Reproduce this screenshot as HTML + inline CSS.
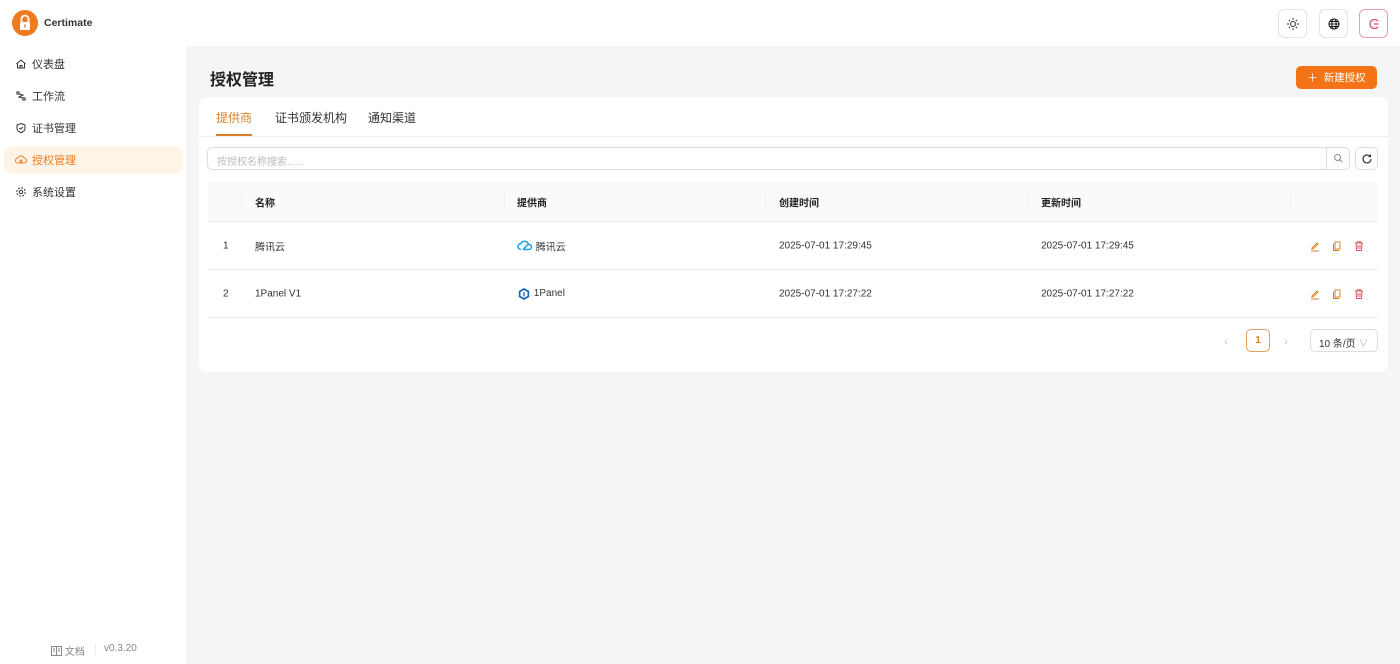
<!DOCTYPE html>
<html><head><meta charset="utf-8"><style>
*{box-sizing:border-box;margin:0;padding:0}
body{width:1400px;height:664px;overflow:hidden;background:#f5f5f5;font-family:"Liberation Sans","Noto Sans CJK SC",sans-serif;color:#222;font-size:12px;position:relative}
.top{position:absolute;left:0;top:0;width:1400px;height:46px;background:#fff}
.side{position:absolute;left:0;top:0;width:186px;height:664px;background:#fff}
.logo{position:absolute;left:12px;top:10px;width:26px;height:26px;border-radius:50%;background:#f07a1e}
.brand{position:absolute;left:44px;top:17px;font-size:10.5px;font-weight:bold;color:#333}
.mi{position:absolute;left:4px;width:179px;height:28px;border-radius:8px;display:flex;align-items:center;padding-left:11px;font-size:11px;color:#333}
.mi svg{margin-right:5px}
.mi.act{background:#fff4e8;color:#f07a1e}
.tb{position:absolute;top:9px;width:29px;height:29px;border:1px solid #e4e4e4;border-radius:6px;display:flex;align-items:center;justify-content:center;background:#fff}
h1{position:absolute;left:210px;top:66px;font-size:16px;font-weight:bold;color:#222}
.new{position:absolute;left:1296px;top:66px;width:81px;height:23px;background:#f57317;border-radius:5px;color:#fff;font-size:10.5px;display:flex;align-items:center;justify-content:center}
.card{position:absolute;left:199px;top:97px;width:1189px;height:275px;background:#fff;border-radius:8px}
.tabs{position:absolute;left:0;top:0;width:100%;height:40px;border-bottom:1px solid #eee}
.tab{position:absolute;top:12px;font-size:12px;color:#333}
.search{position:absolute;left:8px;top:50px;width:1143px;height:23px;border:1px solid #ddd;border-radius:5px;color:#bbb;font-size:10px;padding:5px 9px}
.sbtn{position:absolute;right:0;top:-1px;width:23px;height:23px;border-left:1px solid #ddd}
.ref{position:absolute;left:1156px;top:50px;width:23px;height:23px;border:1px solid #ddd;border-radius:5px;display:flex;align-items:center;justify-content:center}
.thead{position:absolute;left:9px;top:85px;width:1170px;height:40px;background:#fafafa;border-bottom:1px solid #eee;font-weight:bold;font-size:10px}
.row{position:absolute;left:9px;width:1170px;height:48px;border-bottom:1px solid #eee;font-size:10px;color:#333}
.c{position:absolute;top:50%;transform:translateY(-50%);display:flex;align-items:center}
.sep{position:absolute;top:12px;width:1px;height:16px;background:#eee}
</style></head><body>
<div class="top"></div>
<div class="side">
<div class="logo"><svg width="26" height="26" viewBox="0 0 26 26"><path d="M9.5 12V9a3.5 3.5 0 0 1 7 0v3" fill="none" stroke="#fff" stroke-width="1.8"/><rect x="8" y="12" width="10" height="8" rx="1" fill="#fff"/><rect x="12.3" y="14.5" width="1.4" height="3" fill="#f07a1e"/></svg></div>
<div class="brand">Certimate</div>
<div class="mi" style="top:50px"><svg width="12" height="12" viewBox="0 0 12 12" fill="none" stroke="#333"><path d="M1.5 6L6 2l4.5 4M2.5 5v5h7V5M5 10V7.5h2V10"/></svg>仪表盘</div>
<div class="mi" style="top:82px"><svg width="12" height="12" viewBox="0 0 12 12" fill="none" stroke="#333"><circle cx="3" cy="3" r="1.3"/><circle cx="9" cy="9" r="1.3"/><path d="M4 4l4 1-4 2 4 1"/></svg>工作流</div>
<div class="mi" style="top:114px"><svg width="12" height="12" viewBox="0 0 12 12" fill="none" stroke="#333"><path d="M6 1.5l4 1.5v3c0 2.5-2 4-4 4.5C4 10 2 8.5 2 6V3z"/><path d="M4.3 6l1.2 1.2L7.8 5"/></svg>证书管理</div>
<div class="mi act" style="top:146px"><svg width="12" height="12" viewBox="0 0 12 12" fill="none" stroke="#f07a1e"><path d="M3 9a2.5 2.5 0 0 1 0-5 3.2 3.2 0 0 1 6 0 2.5 2.5 0 0 1 0 5z"/><circle cx="6" cy="7" r="1"/></svg>授权管理</div>
<div class="mi" style="top:178px"><svg width="12" height="12" viewBox="0 0 12 12" fill="none" stroke="#333"><circle cx="6" cy="6" r="1.7"/><circle cx="6" cy="6" r="4.2" stroke-dasharray="2 1.3"/></svg>系统设置</div>
<div style="position:absolute;left:51px;top:643px;font-size:10px;color:#888;display:flex;align-items:center"><svg width="11" height="10" viewBox="0 0 11 10" fill="none" stroke="#888"><rect x="0.5" y="0.5" width="10" height="9"/><path d="M5.5 0.5v9M2 3h2M2 5h2M7 3h2M7 5h2"/></svg>&nbsp;文档</div>
<div style="position:absolute;left:95px;top:643px;width:1px;height:12px;background:#eee"></div>
<div style="position:absolute;left:104px;top:643px;font-size:10px;color:#888">v0.3.20</div>
</div>
<div class="tb" style="left:1278px"><svg width="14" height="14" viewBox="0 0 14 14" fill="none" stroke="#333"><circle cx="7" cy="7" r="2.5"/><path d="M7 1v2M7 11v2M1 7h2M11 7h2M2.8 2.8l1.4 1.4M9.8 9.8l1.4 1.4M2.8 11.2l1.4-1.4M9.8 4.2l1.4-1.4"/></svg></div>
<div class="tb" style="left:1319px"><svg width="14" height="14" viewBox="0 0 14 14" fill="none" stroke="#222" stroke-width="1.1"><circle cx="7" cy="7" r="5"/><ellipse cx="7" cy="7" rx="2.2" ry="5"/><path d="M2 7h10M3 4.5h8M3 9.5h8"/></svg></div>
<div class="tb" style="left:1359px;border-color:#e8a0a8"><svg width="14" height="14" viewBox="0 0 14 14" fill="none" stroke="#e05060" stroke-width="1.3"><path d="M11 4.2A4.5 4.5 0 1 0 11 9.8M7 7h4.5"/></svg></div>
<h1>授权管理</h1>
<div class="new">＋&nbsp; 新建授权</div>
<div class="card">
<div class="tabs">
<div class="tab" style="left:17px;color:#d9822b">提供商</div>
<div style="position:absolute;left:17px;top:37px;width:36px;height:2px;background:#d9822b"></div>
<div class="tab" style="left:76px">证书颁发机构</div>
<div class="tab" style="left:169px">通知渠道</div>
</div>
<div class="search">按授权名称搜索......<div class="sbtn"><svg width="23" height="23" viewBox="0 0 23 23" fill="none" stroke="#888"><circle cx="10.5" cy="10.5" r="3"/><path d="M12.7 12.7l2.5 2.5"/></svg></div></div>
<div class="ref"><svg width="12" height="12" viewBox="0 0 12 12" fill="none" stroke="#333" stroke-width="1.2"><path d="M10 6a4 4 0 1 1-1.2-2.9M9.5 1.5v2h-2"/></svg></div>
<div class="thead">
<div class="sep" style="left:33px"></div>
<div class="c" style="left:47px">名称</div>
<div class="sep" style="left:296px"></div>
<div class="c" style="left:309px">提供商</div>
<div class="sep" style="left:557px"></div>
<div class="c" style="left:571px">创建时间</div>
<div class="sep" style="left:819px"></div>
<div class="c" style="left:833px">更新时间</div>
<div class="sep" style="left:1082px"></div>
</div>
<div class="row" style="top:125px">
<div class="c" style="left:15px">1</div><div class="c" style="left:47px">腾讯云</div>
<div class="c" style="left:309px"><svg width="16" height="12" viewBox="0 0 16 12" fill="none" stroke="#1aa0e8" stroke-width="1.5"><path d="M4 10a3 3 0 0 1 0-6 4 4 0 0 1 7.5 1M6 10h6a2.5 2.5 0 0 0 0-5 2.5 2.5 0 0 0-2.5 1.5L6 10"/></svg>&nbsp;腾讯云</div>
<div class="c" style="left:571px">2025-07-01 17:29:45</div><div class="c" style="left:833px">2025-07-01 17:29:45</div>
<div class="c" style="left:1101px;gap:10px"><svg width="12" height="12" viewBox="0 0 12 12" fill="none" stroke="#d9822b"><path d="M3 8l5-5 1 1-5 5H3zM2 11h8"/></svg><svg width="12" height="12" viewBox="0 0 12 12" fill="none" stroke="#d9822b"><path d="M4 2h5v7H4zM3 4H2.5v6.5H8V10"/></svg><svg width="12" height="12" viewBox="0 0 12 12" fill="none" stroke="#e05060"><path d="M2 3h8M4.5 3V1.8h3V3M3 3l.5 7.5h5L9 3M5 5v4M7 5v4"/></svg></div>
</div>
<div class="row" style="top:173px">
<div class="c" style="left:15px">2</div><div class="c" style="left:47px">1Panel V1</div>
<div class="c" style="left:309px"><svg width="14" height="14" viewBox="0 0 14 14"><path d="M7 1l5.2 3v6L7 13 1.8 10V4z" fill="#1565c0"/><path d="M7 3l3.5 2v4L7 11 3.5 9V5z" fill="#fff"/><path d="M6.3 5h1.3v4.5H6.3z" fill="#1565c0"/></svg>&nbsp;1Panel</div>
<div class="c" style="left:571px">2025-07-01 17:27:22</div><div class="c" style="left:833px">2025-07-01 17:27:22</div>
<div class="c" style="left:1101px;gap:10px"><svg width="12" height="12" viewBox="0 0 12 12" fill="none" stroke="#d9822b"><path d="M3 8l5-5 1 1-5 5H3zM2 11h8"/></svg><svg width="12" height="12" viewBox="0 0 12 12" fill="none" stroke="#d9822b"><path d="M4 2h5v7H4zM3 4H2.5v6.5H8V10"/></svg><svg width="12" height="12" viewBox="0 0 12 12" fill="none" stroke="#e05060"><path d="M2 3h8M4.5 3V1.8h3V3M3 3l.5 7.5h5L9 3M5 5v4M7 5v4"/></svg></div>
</div>
<div style="position:absolute;left:1025px;top:237px;color:#ccc;font-size:12px">‹</div>
<div style="position:absolute;left:1047px;top:232px;width:24px;height:23px;border:1px solid #e0a060;border-radius:5px;color:#d9822b;font-size:10px;font-weight:bold;display:flex;align-items:center;justify-content:center">1</div>
<div style="position:absolute;left:1085px;top:237px;color:#ccc;font-size:12px">›</div>
<div style="position:absolute;left:1111px;top:232px;width:68px;height:23px;border:1px solid #ddd;border-radius:5px;font-size:10px;padding:5px 8px;color:#333">10 条/页 <span style="color:#bbb">∨</span></div>
</div>
</body></html>
